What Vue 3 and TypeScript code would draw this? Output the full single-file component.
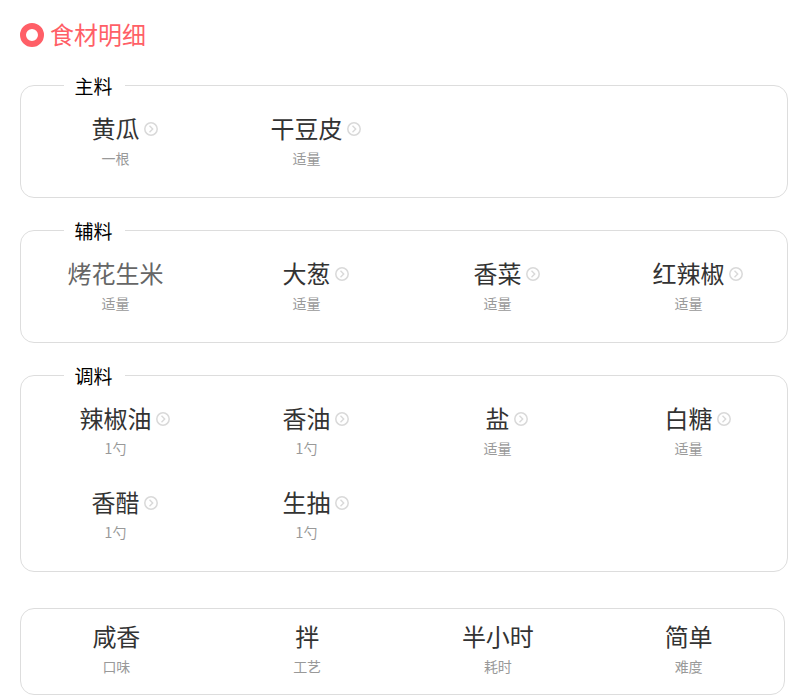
<script setup lang="ts">
interface Item { name: string; sub: string; muted?: boolean }
interface Group { label: string; items: Item[] }
const groups: Group[] = [
  { label: '主料', items: [{ name: '黄瓜', sub: '一根' }, { name: '干豆皮', sub: '适量' }] },
  { label: '辅料', items: [
    { name: '烤花生米', sub: '适量', muted: true }, { name: '大葱', sub: '适量' },
    { name: '香菜', sub: '适量' }, { name: '红辣椒', sub: '适量' } ] },
  { label: '调料', items: [
    { name: '辣椒油', sub: '1勺' }, { name: '香油', sub: '1勺' }, { name: '盐', sub: '适量' },
    { name: '白糖', sub: '适量' }, { name: '香醋', sub: '1勺' }, { name: '生抽', sub: '1勺' } ] },
]
const facts: Item[] = [
  { name: '咸香', sub: '口味' }, { name: '拌', sub: '工艺' },
  { name: '半小时', sub: '耗时' }, { name: '简单', sub: '难度' },
]
</script>

<template>
  <main class="page">
    <h2 class="title"><span class="ring"></span><span class="title-text">食材明细</span></h2>
    <fieldset v-for="g in groups" :key="g.label" class="group">
      <legend class="legend">{{ g.label }}</legend>
      <div class="grid">
        <div v-for="it in g.items" :key="it.name" class="cell">
          <div class="name" :class="{ muted: it.muted }">
            {{ it.name }}
            <svg v-if="!it.muted" class="arrow" viewBox="0 0 14 14" width="14" height="14">
              <circle cx="7" cy="7" r="6.2" fill="none" stroke="#d9d9d9" stroke-width="1.5" />
              <path d="M5.5 3.8 8.7 7 5.5 10.2" fill="none" stroke="#d9d9d9" stroke-width="1.4" />
            </svg>
          </div>
          <div class="sub">{{ it.sub }}</div>
        </div>
      </div>
    </fieldset>
    <section class="facts">
      <div v-for="f in facts" :key="f.name" class="fact">
        <div class="name">{{ f.name }}</div>
        <div class="sub">{{ f.sub }}</div>
      </div>
    </section>
  </main>
</template>

<style>
html, body { margin: 0; background: #fff; }
</style>

<style scoped>
.page {
  width: 793px;
  height: 696px;
  overflow: hidden;
  box-sizing: border-box;
  padding: 19px 5px 0 20px;
  font-family: "Noto Sans CJK SC", "Liberation Sans", sans-serif;
}
.title {
  display: flex;
  align-items: center;
  gap: 6px;
  margin: 0;
  height: 32px;
  font-size: 24px;
  font-weight: 400;
  color: #ff5f67;
}
.title-text {
  padding-bottom: 3px;
}
.ring {
  width: 24px;
  height: 24px;
  box-sizing: border-box;
  border: 6px solid #ff5f67;
  border-radius: 50%;
}
.group {
  margin: 21px 0 0;
  padding: 0 3px 16px 0;
  min-width: 0;
  border: 1px solid #ddd;
  border-radius: 14px;
}
.group + .group { margin-top: 19px; }
.legend {
  margin-left: 43px;
  padding: 2px 12px 0 10.5px;
  font-size: 19px;
  line-height: 24px;
  color: #000;
}
.grid {
  display: grid;
  grid-template-columns: repeat(4, 1fr);
  margin: -1px 0 0 -1px;
}
.cell {
  height: 84px;
  padding-top: 13px;
  box-sizing: border-box;
  text-align: center;
}
.name {
  position: relative;
  display: inline-block;
  font-size: 24px;
  line-height: 36px;
  color: #333;
  white-space: nowrap;
}
.name.muted { color: #666; }
.arrow {
  position: absolute;
  left: 100%;
  top: 12px;
  margin-left: 4px;
}
.sub {
  margin-top: 1px;
  font-size: 14px;
  line-height: 22px;
  color: #999;
}
.facts {
  display: grid;
  grid-template-columns: repeat(4, 1fr);
  width: 765px;
  height: 87px;
  box-sizing: border-box;
  margin-top: 36px;
  border: 1px solid #ddd;
  border-radius: 14px;
}
.fact {
  padding-top: 9px;
  text-align: center;
}
</style>
